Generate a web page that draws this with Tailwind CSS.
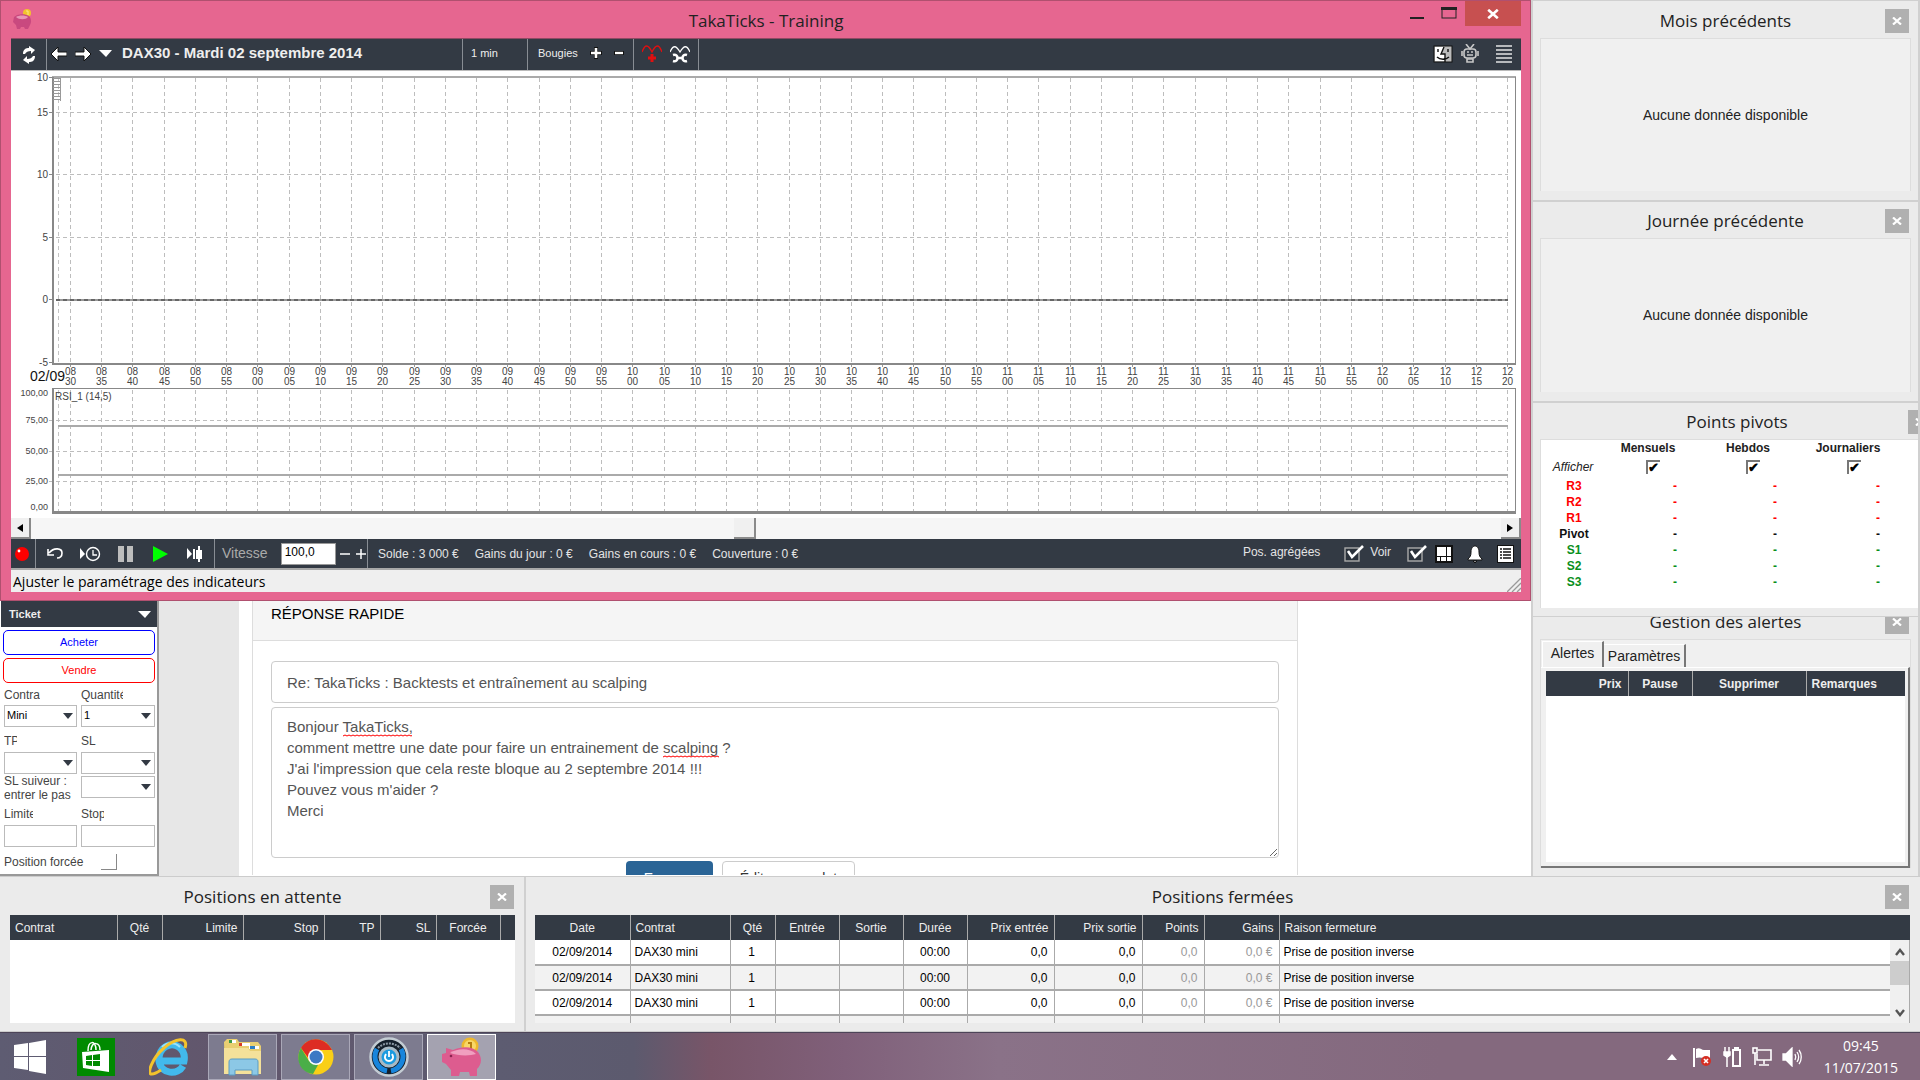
<!DOCTYPE html>
<html lang="fr">
<head>
    <meta charset="UTF-8">
    <meta name="viewport" content="width=device-width, initial-scale=1.0">
    <title>TakaTicks - Training</title>
    <script src="https://cdn.jsdelivr.net/npm/@tailwindcss/browser@4"></script>
</head>
<body class="flex flex-col min-h-screen overflow-hidden bg-white font-['Liberation_Sans',Arial,sans-serif] text-[11px] text-[#222]">

    <!-- Shared shapes -->
    <svg class="hidden">
        <symbol id="cross" viewBox="0 0 10 8"><path d="M1 0.5L9 7.5M9 0.5L1 7.5" stroke="#fff" stroke-width="2.2"/></symbol>
        <symbol id="arrow-down" viewBox="0 0 10 6"><path d="M0 0h10L5 6z" fill="#333a44"/></symbol>
        <symbol id="ticked" viewBox="0 0 20 18">
            <rect x="1" y="3" width="14" height="13" fill="#2b323b" stroke="#aaa" stroke-width="1.4"/>
            <path d="M4 6l4 6L19 1" fill="none" stroke="#fff" stroke-width="2.6"/>
        </symbol>
        <symbol id="wave"><path d="M0 2l2-1 2 1 2-1 2 1 2-1 2 1 2-1 2 1 2-1 2 1 2-1 2 1 2-1 2 1 2-1 2 1 2-1 2 1 2-1 2 1 2-1 2 1 2-1 2 1 2-1 2 1 2-1 2 1 2-1 2 1 2-1 2 1 2-1 2 1 2-1" fill="none" stroke="#f00"/></symbol>
    </svg>

    <div class="flex flex-1">
        <!-- Left side: trading window, ticket and forum page -->
        <div class="flex flex-col flex-1 min-w-0">

            <!-- Main window -->
            <main class="bg-[#e66690] border border-[#b0506f] pl-[10px] pr-[9px] pb-2">
                <header class="flex items-start h-[37px]">
                    <svg class="w-5 h-5 mt-2 ml-[2px]" viewBox="0 0 20 20">
                        <circle cx="14" cy="4" r="4" fill="#f2c42c"/>
                        <path d="M13 2h2v4" fill="none" stroke="#fbe68a"/>
                        <path d="M1 8l3-2c4-1 9-1 12 1 2 2 3 6 1 9l-2 4h-3l-1-2H8l-1 2H4l-1-4-3-3z" fill="#c9497f"/>
                        <path d="M3 8c3-2 9-2 12 0-2 3-9 3-12 0z" fill="#e995b6"/>
                    </svg>
                    <h1 class="flex-1 pl-[98px] text-center text-[17px] leading-[40px] font-['Open_Sans',sans-serif]">TakaTicks - Training</h1>
                    <button class="w-8 h-6 flex justify-center items-center" aria-label="Réduire"><svg width="14" height="14"><path d="M0 12h14" stroke="#222" stroke-width="2"/></svg></button>
                    <button class="w-8 h-6 flex justify-center items-center" aria-label="Agrandir"><svg width="16" height="12"><rect x="1" y="1" width="14" height="10" fill="none" stroke="#222"/><path d="M0 1.5h16" stroke="#222" stroke-width="3"/></svg></button>
                    <button class="w-14 h-[25px] bg-[#c75050] flex justify-center items-center" aria-label="Fermer"><svg class="w-[12px] h-[10px]"><use href="#cross"/></svg></button>
                </header>

                <!-- Top toolbar -->
                <nav class="flex items-center h-8 bg-[#333a44] text-[#eee] border-t border-[#8f4a63]">
                    <button class="w-9 h-full flex justify-center items-center border-r border-[#888d94]" aria-label="Actualiser">
                        <svg width="14" height="18" viewBox="0 0 14 18" fill="#fff"><path d="M1 8c0-5 3-6 6-6V0l6 4-4 4V5C6 5 4 6 3 8zM13 10c0 5-3 6-6 6v2l-6-4 4-4v3c3 0 5-1 6-3z"/></svg>
                    </button>
                    <div class="flex items-center w-[416px] h-full border-r border-[#888d94] pl-1 pb-[2px] gap-2">
                        <button aria-label="Jour précédent"><svg width="16" height="14"><path d="M0 7l7-7v5h9v4H7v5z" fill="#fff" stroke="#111"/></svg></button>
                        <button aria-label="Jour suivant"><svg width="16" height="14"><path d="M16 7L9 0v5H0v4h9v5z" fill="#fff" stroke="#111"/></svg></button>
                        <button aria-label="Choisir le jour"><svg width="13" height="7"><path d="M0 0h13L7 7z" fill="#fff"/></svg></button>
                        <strong class="ml-[2px] text-[15px]">DAX30 - Mardi 02 septembre 2014</strong>
                    </div>
                    <div class="flex items-center w-[65px] h-full border-r border-[#888d94] pl-2 pb-[3px]">1 min</div>
                    <div class="flex items-center w-[106px] h-full border-r border-[#888d94] pl-[10px] pb-[3px] gap-3">
                        Bougies
                        <button aria-label="Plus de bougies"><svg width="12" height="12"><path d="M6 0v12M0 6h12" stroke="#111" stroke-width="4"/><path d="M6 1v10M1 6h10" stroke="#fff" stroke-width="2.6"/></svg></button>
                        <button aria-label="Moins de bougies"><svg width="10" height="10"><path d="M0 5h10" stroke="#111" stroke-width="4"/><path d="M1 5h8" stroke="#fff" stroke-width="2.4"/></svg></button>
                    </div>
                    <div class="flex items-center justify-center w-[65px] h-full border-r border-[#888d94] pb-[2px] gap-2">
                        <button aria-label="Ajouter un indicateur"><svg width="20" height="18" fill="none" stroke="#e01010"><path d="M0 7c3-8 6-8 10 0 4-8 7-8 10 0" stroke-width="1.3"/><path d="M10 9v8M6 13h8" stroke-width="3"/></svg></button>
                        <button aria-label="Régler les indicateurs"><svg width="20" height="18" fill="none" stroke="#fff"><path d="M0 7c3-7 6-7 10 0 4-7 7-7 10 0" stroke-width="1.3"/><path d="M3 10c6-2 6 8 0 6M17 10c-6-2-6 8 0 6M7 13h6" stroke-width="2.6"/></svg></button>
                    </div>
                    <div class="flex items-center ml-auto mr-[9px] pb-[2px]">
                        <button class="mr-2" aria-label="Visage"><svg width="20" height="18"><rect x="1" y="1" width="18" height="16" fill="#bbb" stroke="#111"/><path d="M2 2h9L8 9h4v7H2z" fill="#fff"/><path d="M11 2L8 9h4v8M5 4v3M15 4v3M4 12c3 3 9 3 12 0" fill="none" stroke="#111" stroke-width="1.4"/></svg></button>
                        <button class="mr-[17px]" aria-label="Robot"><svg width="18" height="19" fill="none" stroke="#c8c8c8" stroke-width="1.6"><path d="M5 0l4 5 4-5"/><rect x="3" y="5" width="12" height="9" rx="3"/><path d="M1 7v5M17 7v5M6 15h6v3H6zM6 11h6M6 8h2M10 8h2"/></svg></button>
                        <button aria-label="Menu"><svg width="16" height="18" stroke="#e4e4e4" stroke-width="1.5"><path d="M0 1h16M0 5h16M0 9h16M0 13h16M0 17h16"/></svg></button>
                    </div>
                </nav>

                <!-- Chart -->
                <svg id="chart" class="block w-full bg-white" viewBox="11 70 1510 448" font-family="Liberation Sans, Arial, sans-serif" shape-rendering="crispEdges"></svg>

                <!-- Horizontal scrollbar -->
                <div class="flex h-[21px] bg-[#f6f6f6]">
                    <button class="w-5 flex justify-center items-center bg-[#f0f0f0] border-r-2 border-b-2 border-[#8a8a8a]" aria-label="Défiler à gauche"><svg width="6" height="8"><path d="M6 0v8L0 4z"/></svg></button>
                    <div class="flex-[33]"></div>
                    <div class="w-[22px] bg-[#f0f0f0] border-r-2 border-b-2 border-[#8a8a8a]"></div>
                    <div class="flex-[35]"></div>
                    <button class="w-5 flex justify-center items-center bg-[#f0f0f0] border-r-2 border-b-2 border-[#8a8a8a]" aria-label="Défiler à droite"><svg width="6" height="8"><path d="M0 0v8l6-4z"/></svg></button>
                </div>

                <!-- Bottom toolbar -->
                <div class="flex items-center h-[29px] bg-[#333a44] text-[12px] text-[#e4e4e4]">
                    <button class="w-[25px] h-full flex items-center pl-1 border-r border-[#888d94]" aria-label="Enregistrer"><svg width="14" height="14"><circle cx="7" cy="7" r="7" fill="#f00"/><circle cx="4" cy="4" r="1.4" fill="#fff"/></svg></button>
                    <div class="flex items-center w-[179px] h-full border-r border-[#888d94] pl-[11px] gap-[17px]">
                        <button aria-label="Revenir"><svg width="16" height="12" fill="none" stroke="#fff" stroke-width="1.6"><path d="M2 5c5-6 13-5 13 0 0 3-2 5-5 5M1 1v6h6"/></svg></button>
                        <button aria-label="Aller à l'heure"><svg width="21" height="16"><path d="M0 2v11l5-5z" fill="#fff"/><circle cx="13" cy="8" r="6.5" fill="none" stroke="#fff" stroke-width="1.4"/><path d="M13 4v5h4" fill="none" stroke="#fff" stroke-width="1.3"/></svg></button>
                        <button aria-label="Pause"><svg width="16" height="16"><path d="M0 0h6v16H0zM9 0h6v16H9z" fill="#bdbdbd"/></svg></button>
                        <button class="ml-[2px]" aria-label="Lecture"><svg width="15" height="16"><path d="M0 0v16l15-8z" fill="#0f0"/></svg></button>
                        <button class="ml-[2px]" aria-label="Bougie suivante"><svg width="16" height="16" fill="#fff"><path d="M0 2v11l5-5zM6 3h2v10H6zM9 4h6v9H9zM11 0h2v16h-2z"/></svg></button>
                    </div>
                    <div class="flex items-center w-[153px] h-full border-r border-[#888d94] pl-[7px]">
                        <label class="text-[14px] text-[#aaa]" for="speed">Vitesse</label>
                        <input class="w-[55px] h-[22px] ml-[13px] mr-1 px-[3px] pb-1 bg-white border border-[#999] text-[12px] text-black" id="speed" type="text" value="100,0">
                        <button class="mr-[6px]" aria-label="Ralentir"><svg width="10" height="10"><path d="M0 5h10" stroke="#fff" stroke-width="1.5"/></svg></button>
                        <button aria-label="Accélérer"><svg width="10" height="10"><path d="M0 5h10M5 0v10" stroke="#fff" stroke-width="1.5"/></svg></button>
                    </div>
                    <div class="flex gap-4 pl-[10px]">
                        <span>Solde : 3 000 €</span><span>Gains du jour : 0 €</span><span>Gains en cours : 0 €</span><span>Couverture : 0 €</span>
                    </div>
                    <div class="flex items-center ml-auto mr-[7px]">
                        <label class="mr-6 pb-[3px]" for="grouped">Pos. agrégées</label>
                        <input class="sr-only" id="grouped" type="checkbox" checked><svg class="w-5 h-[18px] mr-[6px]"><use href="#ticked"/></svg>
                        <label class="mr-4 pb-[3px]" for="see">Voir</label>
                        <input class="sr-only" id="see" type="checkbox" checked><svg class="w-5 h-[18px] mr-2"><use href="#ticked"/></svg>
                        <button class="mr-[14px]" aria-label="Disposition"><svg width="18" height="18"><rect width="18" height="18" fill="#111"/><path d="M2 2h9v9H2zM12 2h4v9h-4zM2 12h3v4H2zM6 12h5v4H6zM12 12h4v4h-4z" fill="#fff"/></svg></button>
                        <button class="mr-[14px]" aria-label="Alertes"><svg width="16" height="18"><path d="M8 1c2 0 4 2 4 6 0 4 1 5 3 7v1H1v-1c2-2 3-3 3-7 0-4 2-6 4-6zM6 16h4l-2 2z" fill="#fff" stroke="#111"/></svg></button>
                        <button aria-label="Liste"><svg width="17" height="18"><path d="M0 0h17v18H0z" fill="#111"/><path d="M1 1h15v16H1z" fill="#fff"/><path d="M3 4h2M6 4h8M3 7h2M6 7h8M3 10h2M6 10h8M3 13h2M6 13h8" stroke="#111" stroke-width="1.4"/></svg></button>
                    </div>
                </div>

                <!-- Status bar -->
                <footer class="flex items-center h-6 bg-[#efefef] border-t-2 border-[#a8a8a8] pl-[2px] text-[14px] text-black font-['Open_Sans',sans-serif]">
                    Ajuster le paramétrage des indicateurs
                    <svg class="ml-auto self-end" width="14" height="14" stroke="#999" stroke-width="1.3"><path d="M0 14L14 0M5 14l9-9M10 14l4-4"/></svg>
                </footer>
            </main>

            <div class="flex flex-1">
                <!-- Order ticket -->
                <form class="flex flex-col w-[159px] bg-white border-r-2 border-b-2 border-[#999] pl-[1px] text-[12px] text-[#444]">
                    <div class="flex items-center justify-between h-[26px] bg-[#333a44] pl-2 pr-[6px] text-[11px] font-bold text-[#eee]">
                        Ticket
                        <svg width="13" height="7"><path d="M0 0h13L7 7z" fill="#fff"/></svg>
                    </div>
                    <div class="flex flex-col gap-[3px] px-[2px] pt-[3px] text-[11px]">
                        <button class="h-[25px] border border-[#00f] rounded-[5px] text-[#00f]" type="button">Acheter</button>
                        <button class="h-[25px] border border-[#f00] rounded-[5px] text-[#f00]" type="button">Vendre</button>
                    </div>
                    <div class="grid grid-cols-[73px_74px] gap-x-1 pl-[3px] pt-[2px]">
                        <label class="h-5 leading-5 w-9 overflow-hidden whitespace-nowrap" for="contract">Contrat</label>
                        <label class="h-5 leading-5 w-[42px] overflow-hidden whitespace-nowrap" for="quantity">Quantité</label>
                        <div class="relative"><select class="appearance-none w-full h-[22px] border border-[#bbb] px-[2px] pb-[2px] text-[11px] text-black" id="contract"><option>Mini</option></select><svg class="absolute right-1 top-2 w-[10px] h-[6px]"><use href="#arrow-down"/></svg></div>
                        <div class="relative"><select class="appearance-none w-full h-[22px] border border-[#bbb] px-[2px] pb-[2px] text-[11px] text-black" id="quantity"><option>1</option></select><svg class="absolute right-1 top-2 w-[10px] h-[6px]"><use href="#arrow-down"/></svg></div>
                        <label class="h-[25px] leading-7 w-[13px] overflow-hidden" for="tp">TP</label>
                        <label class="h-[25px] leading-7" for="sl">SL</label>
                        <div class="relative"><select class="appearance-none w-full h-[22px] border border-[#bbb]" id="tp"></select><svg class="absolute right-1 top-2 w-[10px] h-[6px]"><use href="#arrow-down"/></svg></div>
                        <div class="relative"><select class="appearance-none w-full h-[22px] border border-[#bbb]" id="sl"></select><svg class="absolute right-1 top-2 w-[10px] h-[6px]"><use href="#arrow-down"/></svg></div>
                        <label class="h-[27px] leading-[14px] whitespace-nowrap" for="step">SL suiveur :<br>entrer le pas</label>
                        <div class="relative h-[27px] pt-[2px]"><select class="appearance-none w-full h-[22px] border border-[#bbb]" id="step"></select><svg class="absolute right-1 top-[10px] w-[10px] h-[6px]"><use href="#arrow-down"/></svg></div>
                        <label class="h-6 leading-[26px] w-[29px] overflow-hidden" for="limit">Limite</label>
                        <label class="h-6 leading-[26px] w-[23px] overflow-hidden" for="stop">Stop</label>
                        <input class="w-full h-[22px] border border-[#bbb]" id="limit" type="text">
                        <input class="w-full h-[22px] border border-[#bbb]" id="stop" type="text">
                    </div>
                    <div class="flex items-center px-[3px] pt-[6px] gap-[18px]">
                        <label for="forced">Position forcée</label>
                        <input class="appearance-none w-4 h-4 border-r border-b border-[#888]" id="forced" type="checkbox">
                    </div>
                </form>

                <!-- Forum page -->
                <div class="w-20 bg-[#e7e7e7]"></div>
                <section class="flex-1 h-[274px] overflow-hidden bg-white pl-[13px] pr-[233px]">
                    <div class="border-x border-[#ddd] h-full">
                        <h2 class="h-10 bg-[#f5f5f5] border-b border-[#ddd] pl-[18px] text-[15px] leading-[26px] text-black">RÉPONSE RAPIDE</h2>
                        <form class="relative flex flex-col px-[18px] pt-5 text-[15px] text-[#555]">
                            <input class="h-[42px] border border-[#ccc] rounded px-[15px]" type="text" aria-label="Sujet" value="Re: TakaTicks : Backtests et entraînement au scalping">
                            <textarea class="h-[151px] mt-1 border border-[#ccc] rounded px-[15px] pt-2 leading-[21px]" aria-label="Message" spellcheck="false">Bonjour TakaTicks,
comment mettre une date pour faire un entrainement de scalping ?
J'ai l'impression que cela reste bloque au 2 septembre 2014 !!!
Pouvez vous m'aider ?
Merci</textarea>
                            <svg class="absolute left-[90px] top-[93px] w-[69px] h-[3px] overflow-hidden"><use href="#wave"/></svg>
                            <svg class="absolute left-[410px] top-[114px] w-[56px] h-[3px] overflow-hidden"><use href="#wave"/></svg>
                            <div class="flex justify-center gap-[9px] mt-[3px] pr-[69px] text-[14px]">
                                <button class="w-[87px] h-[34px] bg-[#2a6496] rounded text-white" type="button">Envoyer</button>
                                <button class="w-[133px] h-[34px] border border-[#ccc] rounded text-[#333]" type="button">Éditeur complet</button>
                            </div>
                        </form>
                    </div>
                </section>
            </div>
        </div>

        <!-- Right side panels -->
        <aside class="flex flex-col w-[389px] bg-[#ebebeb] border-x-2 border-[#d0d0d0]">
            <section class="h-[200px] border-t border-[#d0d0d0] px-[7px]">
                <div class="relative h-[37px]">
                    <h2 class="text-center text-[17px] leading-[40px] font-['Open_Sans',sans-serif]">Mois précédents</h2>
                    <button class="absolute right-[2px] top-2 w-6 h-6 bg-[#b0b0b0] flex justify-center items-center" aria-label="Fermer"><svg class="w-[10px] h-2"><use href="#cross"/></svg></button>
                </div>
                <p class="flex items-center justify-center h-[153px] bg-[#f0f0f0] border border-b-0 border-[#ddd] text-[14px]">Aucune donnée disponible</p>
            </section>
            <section class="h-[201px] border-t-2 border-[#d0d0d0] px-[7px]">
                <div class="relative h-9">
                    <h2 class="text-center text-[17px] leading-[38px] font-['Open_Sans',sans-serif]">Journée précédente</h2>
                    <button class="absolute right-[2px] top-[7px] w-6 h-6 bg-[#b0b0b0] flex justify-center items-center" aria-label="Fermer"><svg class="w-[10px] h-2"><use href="#cross"/></svg></button>
                </div>
                <p class="flex items-center justify-center h-[154px] bg-[#f0f0f0] border border-b-0 border-[#ddd] text-[14px]">Aucune donnée disponible</p>
            </section>
            <section class="h-[215px] border-t-2 border-[#d0d0d0] pl-[7px]">
                <div class="relative h-9 overflow-hidden">
                    <h2 class="pl-[16px] text-center text-[17px] leading-[38px] font-['Open_Sans',sans-serif]">Points pivots</h2>
                    <button class="absolute -right-[14px] top-[7px] w-6 h-6 bg-[#b0b0b0] flex justify-center items-center" aria-label="Fermer"><svg class="w-[10px] h-2"><use href="#cross"/></svg></button>
                </div>
                <div class="h-[169px] bg-white border-t border-l border-[#ddd]">
                    <table class="table-fixed w-[357px] font-bold text-center leading-4 text-[12px]">
                        <thead>
                            <tr class="text-[#222]"><th class="w-[57px]"></th><th class="w-[100px]">Mensuels</th><th class="w-[100px]">Hebdos</th><th class="w-[100px]">Journaliers</th></tr>
                        </thead>
                        <tbody>
                            <tr class="h-[22px] align-middle">
                                <th class="pl-[7px] font-normal italic">Afficher</th>
                                <td class="pl-[10px]"><input class="block mx-auto w-[14px] h-[14px] appearance-none border-t-2 border-l-2 border-[#777] checked:before:content-['✔'] before:block before:text-[13px] before:leading-[12px] before:text-black" type="checkbox" aria-label="Mensuels" checked></td>
                                <td class="pl-[10px]"><input class="block mx-auto w-[14px] h-[14px] appearance-none border-t-2 border-l-2 border-[#777] checked:before:content-['✔'] before:block before:text-[13px] before:leading-[12px] before:text-black" type="checkbox" aria-label="Hebdos" checked></td>
                                <td class="pl-[12px]"><input class="block mx-auto w-[14px] h-[14px] appearance-none border-t-2 border-l-2 border-[#777] checked:before:content-['✔'] before:block before:text-[13px] before:leading-[12px] before:text-black" type="checkbox" aria-label="Journaliers" checked></td>
                            </tr>
                            <tr class="text-[#f00]"><th class="pl-[9px]">R3</th><td class="pl-[54px]">-</td><td class="pl-[54px]">-</td><td class="pl-[60px]">-</td></tr>
                            <tr class="text-[#f00]"><th class="pl-[9px]">R2</th><td class="pl-[54px]">-</td><td class="pl-[54px]">-</td><td class="pl-[60px]">-</td></tr>
                            <tr class="text-[#f00]"><th class="pl-[9px]">R1</th><td class="pl-[54px]">-</td><td class="pl-[54px]">-</td><td class="pl-[60px]">-</td></tr>
                            <tr class="text-[#111]"><th class="pl-[9px]">Pivot</th><td class="pl-[54px]">-</td><td class="pl-[54px]">-</td><td class="pl-[60px]">-</td></tr>
                            <tr class="text-[#0a8f1c]"><th class="pl-[9px]">S1</th><td class="pl-[54px]">-</td><td class="pl-[54px]">-</td><td class="pl-[60px]">-</td></tr>
                            <tr class="text-[#0a8f1c]"><th class="pl-[9px]">S2</th><td class="pl-[54px]">-</td><td class="pl-[54px]">-</td><td class="pl-[60px]">-</td></tr>
                            <tr class="text-[#0a8f1c]"><th class="pl-[9px]">S3</th><td class="pl-[54px]">-</td><td class="pl-[54px]">-</td><td class="pl-[60px]">-</td></tr>
                        </tbody>
                    </table>
                </div>
            </section>
            <section class="flex flex-col flex-1 border-t border-[#d0d0d0] px-[7px] pb-2">
                <div class="relative h-[22px] overflow-hidden">
                    <h2 class="-mt-[7px] text-center text-[17px] leading-6 font-['Open_Sans',sans-serif]">Gestion des alertes</h2>
                    <button class="absolute right-[2px] -top-[7px] w-6 h-6 bg-[#b0b0b0] flex justify-center items-center" aria-label="Fermer"><svg class="w-[10px] h-2"><use href="#cross"/></svg></button>
                </div>
                <div class="flex flex-col flex-1 border border-b-0 border-[#ddd] bg-[#f0f0f0]">
                    <div class="flex items-end h-[27px] text-[14px]">
                        <button class="h-[26px] w-[62px] ml-[1px] border-t border-l border-t-white border-l-white border-r-2 border-r-[#777] pb-[3px]">Alertes</button>
                        <button class="h-[23px] w-[82px] border-t border-t-white border-r-2 border-r-[#777]">Paramètres</button>
                    </div>
                    <div class="flex-1 border-t border-t-white border-r-2 border-b-2 border-[#777] pl-[5px] pr-[3px] pb-1 pt-[3px]">
                        <div class="h-full bg-white">
                            <table class="w-full table-fixed h-[25px] bg-[#333a44] text-[#eee] text-[12px]">
                                <tr>
                                    <th class="w-[82px] text-right pr-[6px] border-r border-[#aaa]">Prix</th>
                                    <th class="w-[64px] border-r border-[#aaa]">Pause</th>
                                    <th class="w-[114px] border-r border-[#aaa]">Supprimer</th>
                                    <th class="text-left pl-[5px]">Remarques</th>
                                </tr>
                            </table>
                        </div>
                    </div>
                </div>
            </section>
        </aside>
    </div>

    <!-- Positions -->
    <div class="flex h-[156px] bg-[#ebebeb] border-y border-[#ccc] text-[12px]">
        <section class="w-[526px] border-r-2 border-[#d0d0d0] pl-[10px] pr-[9px]">
            <div class="relative h-[38px]">
                <h2 class="text-center text-[17px] leading-[40px] font-['Open_Sans',sans-serif]">Positions en attente</h2>
                <button class="absolute right-[1px] top-2 w-6 h-6 bg-[#b0b0b0] flex justify-center items-center" aria-label="Fermer"><svg class="w-[10px] h-2"><use href="#cross"/></svg></button>
            </div>
            <div class="h-[108px] bg-white">
                <table class="w-full table-fixed h-[25px] bg-[#333a44] text-[#eee]">
                    <tr>
                        <th class="w-[107px] font-normal text-left pl-[5px] border-r border-[#aaa]">Contrat</th>
                        <th class="w-[45px] font-normal border-r border-[#aaa]">Qté</th>
                        <th class="w-[81px] font-normal text-right pr-[5px] border-r border-[#aaa]">Limite</th>
                        <th class="w-[81px] font-normal text-right pr-[5px] border-r border-[#aaa]">Stop</th>
                        <th class="w-[56px] font-normal text-right pr-[5px] border-r border-[#aaa]">TP</th>
                        <th class="w-[56px] font-normal text-right pr-[5px] border-r border-[#aaa]">SL</th>
                        <th class="w-[64px] font-normal border-r border-[#aaa]">Forcée</th>
                        <th></th>
                    </tr>
                </table>
            </div>
        </section>
        <section class="flex-1 min-w-0 pr-[10px] pl-[9px]">
            <div class="relative h-[38px]">
                <h2 class="text-center text-[17px] leading-[40px] font-['Open_Sans',sans-serif]">Positions fermées</h2>
                <button class="absolute right-[1px] top-2 w-6 h-6 bg-[#b0b0b0] flex justify-center items-center" aria-label="Fermer"><svg class="w-[10px] h-2"><use href="#cross"/></svg></button>
            </div>
            <div class="relative h-[108px] overflow-hidden bg-white">
                <table class="w-full table-fixed text-black">
                    <thead>
                        <tr class="h-[25px] bg-[#333a44] text-[#eee]">
                            <th class="w-[95px] font-normal border-r border-[#aaa]">Date</th>
                            <th class="w-[100px] font-normal text-left pl-[5px] border-r border-[#aaa]">Contrat</th>
                            <th class="w-[45px] font-normal border-r border-[#aaa]">Qté</th>
                            <th class="w-[64px] font-normal border-r border-[#aaa]">Entrée</th>
                            <th class="w-[64px] font-normal border-r border-[#aaa]">Sortie</th>
                            <th class="w-[64px] font-normal border-r border-[#aaa]">Durée</th>
                            <th class="w-[87px] font-normal text-right pr-[5px] border-r border-[#aaa]">Prix entrée</th>
                            <th class="w-[88px] font-normal text-right pr-[5px] border-r border-[#aaa]">Prix sortie</th>
                            <th class="w-[62px] font-normal text-right pr-[5px] border-r border-[#aaa]">Points</th>
                            <th class="w-[75px] font-normal text-right pr-[5px] border-r border-[#aaa]">Gains</th>
                            <th class="font-normal text-left pl-[5px]">Raison fermeture</th>
                        </tr>
                    </thead>
                    <tbody id="closed"></tbody>
                </table>
                <div class="absolute right-[1px] top-[25px] bottom-0 w-[19px] bg-[#f0f0f0] flex flex-col items-center">
                    <svg class="mt-2" width="10" height="8" fill="none" stroke="#555" stroke-width="2.4"><path d="M1 7l4-5 4 5"/></svg>
                    <div class="w-full h-6 mt-[5px] bg-[#cdcdcd]"></div>
                    <svg class="mt-auto mb-[6px]" width="10" height="8" fill="none" stroke="#555" stroke-width="2.4"><path d="M1 1l4 5 4-5"/></svg>
                </div>
            </div>
        </section>
    </div>

    <!-- Taskbar -->
    <div class="flex items-center h-12 bg-[linear-gradient(90deg,#5e5c72_0%,#62566c_12%,#5d5c71_26%,#5c5a6e_33%,#785568_37%,#80607a_44%,#8a7288_52%,#84697e_75%,#84697e_100%)] border-t border-[#4d4458] pl-[14px] text-white">
        <button class="mr-[31px]" aria-label="Démarrer"><svg width="32" height="34" fill="#fff"><path d="M0 5l14-2v13H0zM15 3l17-3v16H15zM0 17h14v13L0 28zM15 17h17v17l-17-3z"/></svg></button>
        <button class="mr-[34px]" aria-label="Store"><svg width="38" height="38"><path fill="#008a00" d="M0 0h38v38H0z"/><path d="M11 13c0-11 8-11 8-1M14 12c1-9 9-8 9 0" fill="none" stroke="#fff" stroke-width="1.5"/><path d="M5 14l27-2v22L6 30z" fill="#fff"/><path d="M9 18l6-1v5H9zM16 17l7-1v6h-7zM9 23h6v5l-6-1zM16 23h7v5h-7z" fill="#008a00"/></svg></button>
        <button class="mr-5" aria-label="Internet Explorer">
            <svg width="39" height="38" fill="none"><path d="M34 28c-5 9-22 9-24-5C9 10 21 3 30 9c5 4 6 9 5 14H13" stroke="#42b9ec" stroke-width="7"/><path d="M13 9c5-5 13-5 18 0" stroke="#9be2fa" stroke-width="2"/><path d="M36 10C40-2 26 0 15 10 3 20-3 37 3 36c3 0 6-2 9-4" stroke="#f3c32c" stroke-width="3"/></svg>
        </button>
        <div class="flex gap-1">
            <button class="w-[69px] h-[46px] flex justify-center items-center bg-[#7d7b8f] border border-[#aaa8b8]" aria-label="Explorateur">
                <svg width="40" height="38"><path d="M1 4l3-3h10l2 3h19l3 4v28H2z" fill="#e9cf72"/><path d="M6 2h7v3H6zM16 5h11v3H16zM26 8h10v3H26z" fill="#fff"/><path d="M6 2h3v3H6z" fill="#3a9a48"/><path d="M27 8h5v3h-5z" fill="#2d7fc4"/><path d="M16 5h3v3h-3z" fill="#d93b26"/><path d="M1 10h24l2 3h11v23H1z" fill="#f4e19a"/><path d="M6 37V24c0-2 1-3 3-3h23c2 0 3 1 3 3v13h-6v-5H12v5z" fill="#8cc8e6" stroke="#5a9cc4"/></svg>
            </button>
            <button class="w-[69px] h-[46px] flex justify-center items-center bg-[#7d7b8f] border border-[#aaa8b8]" aria-label="Chrome">
                <svg width="36" height="36"><circle cx="18" cy="18" r="17.5" fill="#f9cf16"/><path d="M3 9C10-3 27-3 34 11H18L11 20z" fill="#dd2c23"/><path d="M3 9l8 13 9 4-5 9C1 33-3 19 3 9z" fill="#4aae48"/><circle cx="18" cy="18" r="8" fill="#fff"/><circle cx="18" cy="18" r="6.5" fill="#3c79c4"/></svg>
            </button>
            <button class="w-[69px] h-[46px] flex justify-center items-center bg-[#7d7b8f] border border-[#aaa8b8]" aria-label="Instant On">
                <svg width="40" height="40" fill="none"><circle cx="20" cy="20" r="18.5" fill="#15202c" stroke="#c3ccd3" stroke-width="2.5"/><path d="M8 12c-5 9 0 20 10 22M32 12c5 9 0 20-10 22" stroke="#1785dc" stroke-width="5"/><circle cx="20" cy="20" r="9" fill="#1b9be0" stroke="#a9bac5" stroke-width="3"/><path d="M17 17c-3 5 1 7 3 7s6-2 3-7M20 14v6" stroke="#fff" stroke-width="1.8"/><path d="M9 11c6-6 16-6 22 0" stroke="#8b98a4" stroke-width="2" stroke-dasharray="2 1"/></svg>
            </button>
            <button class="w-[69px] h-[46px] flex justify-center items-center bg-[#a4a2b0] border border-white" aria-label="TakaTicks">
                <svg width="40" height="40"><circle cx="28" cy="9" r="8.5" fill="#eeb82c"/><circle cx="28" cy="9" r="6" fill="#f8d767"/><path d="M26 6h3v7" fill="none" stroke="#b57c10" stroke-width="2"/><path d="M4 11l7 2c9-4 20-4 25 2 5 7 3 13-1 17v7h-7l-1-4h-9l-1 4H9v-6l-5-6-4-2v-8l4-1z" fill="#dd5c8f"/><path d="M8 16c8-5 20-5 26 1-6 2-18 2-26-1z" fill="#f09fbf"/><circle cx="9" cy="19" r="1.3" fill="#8c2350"/></svg>
            </button>
        </div>
        <div class="flex items-center ml-auto">
            <button class="mr-4" aria-label="Icônes cachées"><svg width="10" height="6"><path d="M0 6h10L5 0z" fill="#fff"/></svg></button>
            <button class="mr-[11px]" aria-label="Centre de maintenance"><svg width="19" height="20"><path d="M1 1v19" stroke="#fff" stroke-width="2"/><path d="M3 2c4-2 5 1 8 1h6v8c-5 2-8-2-14 0z" fill="#fff"/><circle cx="13" cy="14" r="5" fill="#d62f24"/><path d="M11 12l4 4M15 12l-4 4" stroke="#fff" stroke-width="1.6"/></svg></button>
            <button class="mr-[10px]" aria-label="Batterie"><svg width="19" height="20" fill="none" stroke="#fff" stroke-width="1.5"><path d="M2 0v5M6 0v5M4 9v11"/><path d="M1 5h6v3L4 10 1 8z" fill="#fff"/><rect x="10" y="3" width="7" height="16" stroke-width="2"/><path d="M11 1h5" stroke-width="2"/></svg></button>
            <button class="mr-[10px]" aria-label="Réseau"><svg width="20" height="20" fill="none" stroke="#fff" stroke-width="1.6"><path d="M6 3h13v10H5V7M12 13v4M7 18h10"/><rect x="1" y="1" width="4" height="5"/><path d="M3 6v12"/></svg></button>
            <button class="mr-[22px]" aria-label="Volume"><svg width="20" height="20" fill="none" stroke="#fff" stroke-width="1.3"><path d="M1 7h3l6-6v18l-6-6H1z" fill="#fff"/><path d="M13 7c1 2 1 4 0 6M15 5c2 3 2 7 0 10M17 3c3 4 3 10 0 14"/></svg></button>
            <time class="mr-[22px] text-center text-[14px] leading-[22px] font-['Open_Sans',sans-serif]">09:45<br>11/07/2015</time>
        </div>
    </div>

    <script>
        // Chart grid, axes and labels
        const chart = document.getElementById("chart");
        const step = 31.24;
        let out = "";

        function line(x1, y1, x2, y2, color, width, dash) {
            out += `<line x1="${x1}" y1="${y1}" x2="${x2}" y2="${y2}" stroke="${color}" stroke-width="${width}" ${dash ? 'stroke-dasharray="4 3"' : ""}/>`;
        }
        function text(x, y, value, anchor, size, color) {
            out += `<text x="${x}" y="${y}" text-anchor="${anchor}" font-size="${size}" fill="${color}">${value}</text>`;
        }

        line(11, 70.5, 1521, 70.5, "#bbb", 1);
        line(58.5, 78, 58.5, 363, "#c4c4c4", 1, true);
        line(58.5, 390, 58.5, 511, "#c4c4c4", 1, true);
        for (let i = 0; i <= 46; i++) {
            const x = Math.round(70 + i * step) + 0.5;
            const minutes = 510 + i * 5;
            line(x, 78, x, 363, "#bdbdbd", 1, true);
            line(x, 363, x, 367, "#999", 1);
            line(x, 390, x, 511, "#bdbdbd", 1, true);
            text(x, 375, String(Math.floor(minutes / 60)).padStart(2, "0"), "middle", 10, "#444");
            text(x, 385, String(minutes % 60).padStart(2, "0"), "middle", 10, "#444");
        }

        [[10, 77], [15, 112], [10, 174], [5, 237], [0, 299], [-5, 362]].forEach(([value, y], i) => {
            text(48, y + 4, value, "end", 10, "#444");
            line(49, y + 0.5, 53, y + 0.5, "#888", 1);
            if (i > 0 && i < 5) line(56, y + 0.5, 1508, y + 0.5, "#bdbdbd", 1, true);
        });
        [["100,00", 393], ["75,00", 420], ["50,00", 451], ["25,00", 481], ["0,00", 507]].forEach(([value, y], i) => {
            text(48, y + 3, value, "end", 9, "#444");
            if (i > 0 && i < 4) line(49, y + 0.5, 1508, y + 0.5, "#bdbdbd", 1, true);
        });

        line(56, 300, 1508, 300, "#999", 2);
        line(56, 300, 1508, 300, "#666", 2, true);
        line(58, 426, 1508, 426, "#aaa", 2);
        line(58, 475, 1508, 475, "#aaa", 2);
        line(52, 77, 1516, 77, "#aaa", 2);
        line(53, 77, 53, 365, "#888", 2);
        line(52, 364, 1516, 364, "#888", 2);
        line(1515.5, 77, 1515.5, 365, "#888", 1);
        line(52, 388.5, 1516, 388.5, "#888", 1);
        line(53, 389, 53, 514, "#888", 2);
        line(52, 512.5, 1516, 512.5, "#888", 3);
        line(1515.5, 389, 1515.5, 514, "#888", 1);
        for (let y = 78; y < 102; y += 3) line(53, y + 0.5, 61, y + 0.5, "#999", 1);
        line(60.5, 78, 60.5, 101, "#999", 1);
        text(30, 381, "02/09", "start", 14, "#111");
        text(55, 400, "RSI_1 (14,5)", "start", 10, "#444");
        chart.innerHTML = out;

        // Closed positions, the last row is cut by the panel
        const rows = Array(4).fill(["02/09/2014", "DAX30 mini", "1", "", "", "00:00", "0,0", "0,0", "0,0", "0,0 €", "Prise de position inverse"]);
        const cell = ["text-center", "text-left pl-1", "text-center pr-[2px]", "", "", "text-center", "text-right pr-[6px]", "text-right pr-[6px]", "text-right pr-[6px] text-[#999]", "text-right pr-[6px] text-[#999]", "text-left pl-1"];
        document.getElementById("closed").innerHTML = rows.map((row, r) =>
            `<tr class="h-[25px] border-b-2 border-[#aaa] ${r % 2 ? "bg-[#f2f2f2]" : "bg-white"}">` +
            row.map((value, c) => `<td class="border-r border-[#aaa] ${cell[c]}">${r < 3 ? value : ""}</td>`).join("") + "</tr>"
        ).join("");
    </script>
</body>
</html>
